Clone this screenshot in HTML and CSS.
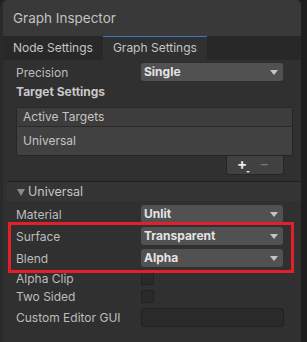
FILE: index.html
```html
<!DOCTYPE html>
<html>
<head>
<meta charset="utf-8">
<link rel="stylesheet" href="styles.css">
</head>
<body>
<div class="panel">
    <div class="titulo">Graph Inspector</div>

    <div class="abas">
        <div class="aba">Node Settings</div>
        <div class="aba ativa">Graph Settings</div>
    </div>

    <div class="conteudo">
        <div class="linha">
            <span class="rotulo">Precision</span>
            <div class="dropdown">Single<span class="seta"></span></div>
        </div>
        <div class="secao">Target Settings</div>

        <div class="lista">
            <div class="lista_cab">Active Targets</div>
            <div class="lista_item">Universal</div>
        </div>
        <div class="lista_rodape">
            <span class="mais">+<span class="mini_seta"></span></span>
            <span class="menos">&minus;</span>
        </div>
    </div>

    <div class="foldout">
        <span class="triangulo"></span>Universal
    </div>

    <div class="conteudo campos">
        <div class="linha">
            <span class="rotulo">Material</span>
            <div class="dropdown">Unlit<span class="seta"></span></div>
        </div>
        <div class="destaque">
            <div class="linha">
                <span class="rotulo">Surface</span>
                <div class="dropdown">Transparent<span class="seta"></span></div>
            </div>
            <div class="linha">
                <span class="rotulo">Blend</span>
                <div class="dropdown">Alpha<span class="seta"></span></div>
            </div>
        </div>
        <div class="linha baixa">
            <span class="rotulo">Alpha Clip</span>
            <div class="check"></div>
        </div>
        <div class="linha baixa">
            <span class="rotulo">Two Sided</span>
            <div class="check"></div>
        </div>
        <div class="linha texto">
            <span class="rotulo">Custom Editor GUI</span>
            <div class="campo_texto"></div>
        </div>
    </div>
</div>
</body>
</html>
```

FILE: styles.css
```css
body{
    margin: 0;
    background-color: #1e1e1e;
    font-family: Inter, "Noto Sans", sans-serif;
    font-size: 12px;
    color: #c4c4c4;
    height: 342px;
    overflow: hidden;
}

.panel{
    margin-left: 3px;
    width: 298px;
    height: 342px;
    background-color: #303030;
    border-radius: 5px 5px 0 0;
    overflow: hidden;
    box-shadow: -3px 0 0 #2a2a2a;
}

.titulo{
    height: 36px;
    line-height: 36px;
    padding-left: 10px;
    font-size: 13.5px;
    color: #c2c2c2;
    background-color: #393939;
}

.abas{
    display: flex;
    height: 24px;
    background-color: #282828;
}

.aba{
    padding: 0 10px;
    line-height: 23px;
    color: #c4c4c4;
}

.aba.ativa{
    background-color: #303030;
    border-top: 1px solid #3a79bb;
    line-height: 22px;
    width: 84px;
}

.conteudo{
    padding: 3px 0 0 13px;
}

.linha{
    display: flex;
    align-items: center;
    height: 18px;
    margin-bottom: 4px;
}

.linha.baixa{
    margin-bottom: 0;
}

.linha.texto{
    height: 21px;
    margin-top: 2px;
}

.rotulo{
    width: 125px;
    color: #bdbdbd;
}

.dropdown{
    position: relative;
    width: 139px;
    height: 18px;
    line-height: 18px;
    padding-left: 3px;
    background-color: #515151;
    border-radius: 3px;
    font-weight: bold;
    color: #e4e4e4;
}

.seta{
    position: absolute;
    right: 5px;
    top: 7px;
    border-left: 4px solid transparent;
    border-right: 4px solid transparent;
    border-top: 5px solid #c4c4c4;
}

.secao{
    font-weight: bold;
    color: #c8c8c8;
    height: 14px;
    line-height: 14px;
    margin-top: 1px;
}

.lista{
    margin-top: 8px;
    width: 275px;
    border: 1px solid #262626;
    border-radius: 3px;
    background-color: #414141;
}

.lista_cab{
    height: 18px;
    line-height: 18px;
    padding-left: 6px;
    background-color: #3d3d3d;
    border-bottom: 1px solid #2a2a2a;
}

.lista_item{
    height: 28px;
    line-height: 27px;
    padding-left: 6px;
}

.lista_rodape{
    display: flex;
    gap: 12px;
    margin-left: 210px;
    width: 46px;
    height: 18px;
    padding-left: 10px;
    background-color: #414141;
    border: 1px solid #262626;
    border-top: none;
    border-radius: 0 0 3px 3px;
    line-height: 16px;
    font-size: 15px;
}

.mais{
    position: relative;
    color: #e8e8e8;
    font-weight: bold;
}

.mini_seta{
    position: absolute;
    right: -3px;
    bottom: 1px;
    border-left: 2px solid transparent;
    border-right: 2px solid transparent;
    border-top: 2px solid #e0e0e0;
}

.menos{
    color: #7a7a7a;
}

.foldout{
    margin: 6px 0 0 4px;
    height: 19px;
    line-height: 19px;
    background-color: #353535;
    border-top: 1px solid #1f1f1f;
    font-size: 12.5px;
    color: #c4c4c4;
}

.triangulo{
    display: inline-block;
    margin: 0 3px 0 10px;
    border-left: 4px solid transparent;
    border-right: 4px solid transparent;
    border-top: 7px solid #8a8a8a;
}

.campos{
    padding-top: 4px;
}

.destaque{
    position: relative;
}

.destaque::after{
    content: "";
    position: absolute;
    top: -5px;
    left: -8px;
    right: 7px;
    bottom: -6px;
    border: 3px solid #e3202a;
}

.destaque .linha:last-child{
    margin-bottom: 2px;
}

.check{
    width: 11px;
    height: 11px;
    background-color: #2a2a2a;
    border: 1px solid #212121;
    border-radius: 2px;
}

.campo_texto{
    width: 141px;
    height: 17px;
    background-color: #2a2a2a;
    border: 1px solid #212121;
    border-radius: 3px;
}
```
